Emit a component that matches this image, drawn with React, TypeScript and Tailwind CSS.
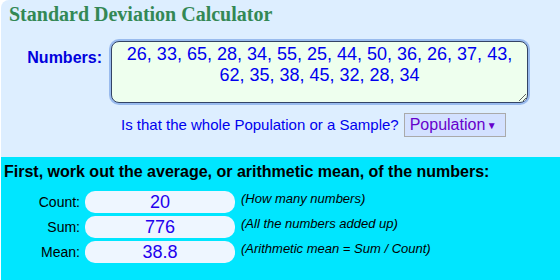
import { useState } from "react";

const rows = [
  { label: "Count:", value: "20", note: "(How many numbers)" },
  { label: "Sum:", value: "776", note: "(All the numbers added up)" },
  { label: "Mean:", value: "38.8", note: "(Arithmetic mean = Sum / Count)" },
];

export default function App() {
  const [nums, setNums] = useState(
    "26, 33, 65, 28, 34, 55, 25, 44, 50, 36, 26, 37, 43, 62, 35, 38, 45, 32, 28, 34"
  );

  return (
    <div className="w-[560px] h-[280px] overflow-hidden bg-white font-['Liberation_Sans',Arial,sans-serif]">
      <div className="ml-px h-[157px] bg-[#ddeeff] rounded-tl-lg">
        <h1 className="pl-2 pt-[2px] text-[20px] leading-[24px] font-bold text-[#338855] font-['Liberation_Serif','Times_New_Roman',serif]">
          Standard Deviation Calculator
        </h1>

        <div className="flex items-start mt-[15px]">
          <label className="w-[101px] text-right pt-[7px] text-[16px] leading-[20px] font-bold text-[#0000dd]">
            Numbers:
          </label>
          <textarea
            value={nums}
            onChange={(e) => setNums(e.target.value)}
            className="ml-[9px] w-[417px] h-[62px] p-[2px] rounded-lg border border-[#334466] bg-[#eeffee] text-center text-[18px] leading-[21px] text-[#0000ee] outline-none shadow-[0_0_0_2px_#99bbee]"
          />
        </div>

        <div className="flex items-center ml-[120px] mt-[10px]">
          <span className="text-[15px] text-[#0000ee]">
            Is that the whole Population or a Sample?
          </span>
          <button className="ml-[5px] h-[24px] w-[102px] flex items-center justify-between pl-[5px] pr-[8px] border border-[#aaaaaa] bg-[#d3e1ff] text-[16px] text-[#6600cc]">
            <span>Population</span>
            <span className="text-[10px]">▼</span>
          </button>
        </div>
      </div>

      <div className="ml-px h-[123px] bg-[#00e6ff] pt-[5px]">
        <h2 className="pl-[3px] text-[16px] leading-[20px] font-bold text-black">
          First, work out the average, or arithmetic mean, of the numbers:
        </h2>
        <div className="mt-[9px] flex flex-col gap-[3px]">
          {rows.map((r) => (
            <div key={r.label} className="flex items-start">
              <div className="w-[79px] h-[22px] flex items-center justify-end text-[14px] text-black">
                {r.label}
              </div>
              <div className="ml-[5px] w-[150px] h-[22px] rounded-[10px] bg-[#eef6ff] flex items-center justify-center text-[18px] text-[#2200ee]">
                {r.value}
              </div>
              <div className="ml-[6px] text-[13px] leading-[16px] italic text-black">
                {r.note}
              </div>
            </div>
          ))}
        </div>
      </div>
    </div>
  );
}
